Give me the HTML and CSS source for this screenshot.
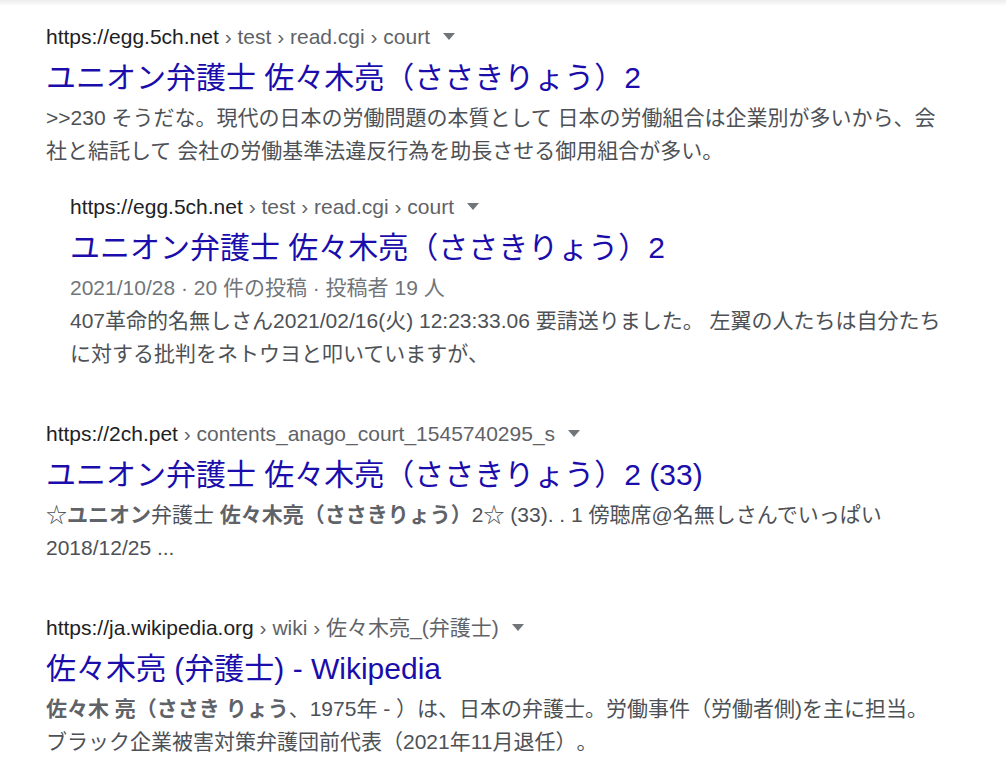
FILE: index.html
```html
<!DOCTYPE html>
<html>
	<head>
		<link rel="stylesheet" href="styles.css">
	</head>
	<body>
		<div class="topbar"></div>
		<div class="results">
			<div class="result">
				<div class="item">
					<div class="url">
						<span class="host">https://egg.5ch.net</span> › test › read.cgi › court<span class="arrow"></span>
					</div>
					<div class="title">ユニオン弁護士 佐々木亮（ささきりょう）2</div>
					<div class="snippet">&gt;&gt;230 そうだな。現代の日本の労働問題の本質として 日本の労働組合は企業別が多いから、会社と結託して 会社の労働基準法違反行為を助長させる御用組合が多い。</div>
				</div>
				<div class="item nested">
					<div class="url">
						<span class="host">https://egg.5ch.net</span> › test › read.cgi › court<span class="arrow"></span>
					</div>
					<div class="title">ユニオン弁護士 佐々木亮（ささきりょう）2</div>
					<div class="meta">2021/10/28 · 20 件の投稿 · 投稿者 19 人</div>
					<div class="snippet">407革命的名無しさん2021/02/16(火) 12:23:33.06 要請送りました。 左翼の人たちは自分たちに対する批判をネトウヨと叩いていますが、</div>
				</div>
			</div>
			<div class="result">
				<div class="item">
					<div class="url">
						<span class="host">https://2ch.pet</span> › contents_anago_court_1545740295_s<span class="arrow"></span>
					</div>
					<div class="title">ユニオン弁護士 佐々木亮（ささきりょう）2 (33)</div>
					<div class="snippet">☆<em>ユニオン</em>弁護士 <em>佐々木亮（ささきりょう）</em>2☆ (33). . 1 傍聴席@名無しさんでいっぱい 2018/12/25 ...</div>
				</div>
			</div>
			<div class="result">
				<div class="item">
					<div class="url">
						<span class="host">https://ja.wikipedia.org</span> › wiki › 佐々木亮_(弁護士)<span class="arrow"></span>
					</div>
					<div class="title">佐々木亮 (弁護士) - Wikipedia</div>
					<div class="snippet"><em>佐々木 亮（ささき りょう</em>、1975年 - ）は、日本の弁護士。労働事件（労働者側)を主に担当。 ブラック企業被害対策弁護団前代表（2021年11月退任）。</div>
				</div>
			</div>
		</div>
	</body>
</html>
```

FILE: styles.css
```css
*{
	margin: 0;
	padding: 0;
}
html,body{
	background: #fff;
}
body{
	font-family: "Liberation Sans", Arial, "Noto Sans CJK JP", sans-serif;
	text-spacing-trim: space-all;
}
.topbar{
	height: 6px;
	background: linear-gradient(#ececec, #fff);
}
.results{
	width: 900px;
	padding: 17px 0 0 46px;
}
.result{
	margin-bottom: 50px;
}
.nested{
	margin: 26px 0 0 24px;
}
.url{
	font-size: 21px;
	line-height: 27px;
	color: #5f6368;
	white-space: nowrap;
}
.host{
	color: #202124;
}
.arrow{
	display: inline-block;
	margin-left: 13px;
	vertical-align: 4px;
	border-left: 6px solid transparent;
	border-right: 6px solid transparent;
	border-top: 7px solid #70757a;
}
.title{
	margin-top: 8px;
	font-size: 30px;
	line-height: 39px;
	color: #1a0dab;
}
.snippet,
.meta{
	margin-top: 4px;
	font-size: 21px;
	line-height: 33px;
	color: #4d5156;
}
.meta{
	color: #70757a;
}
.meta + .snippet{
	margin-top: 0;
}
.snippet em{
	font-style: normal;
	font-weight: bold;
	color: #5f6368;
}
```
